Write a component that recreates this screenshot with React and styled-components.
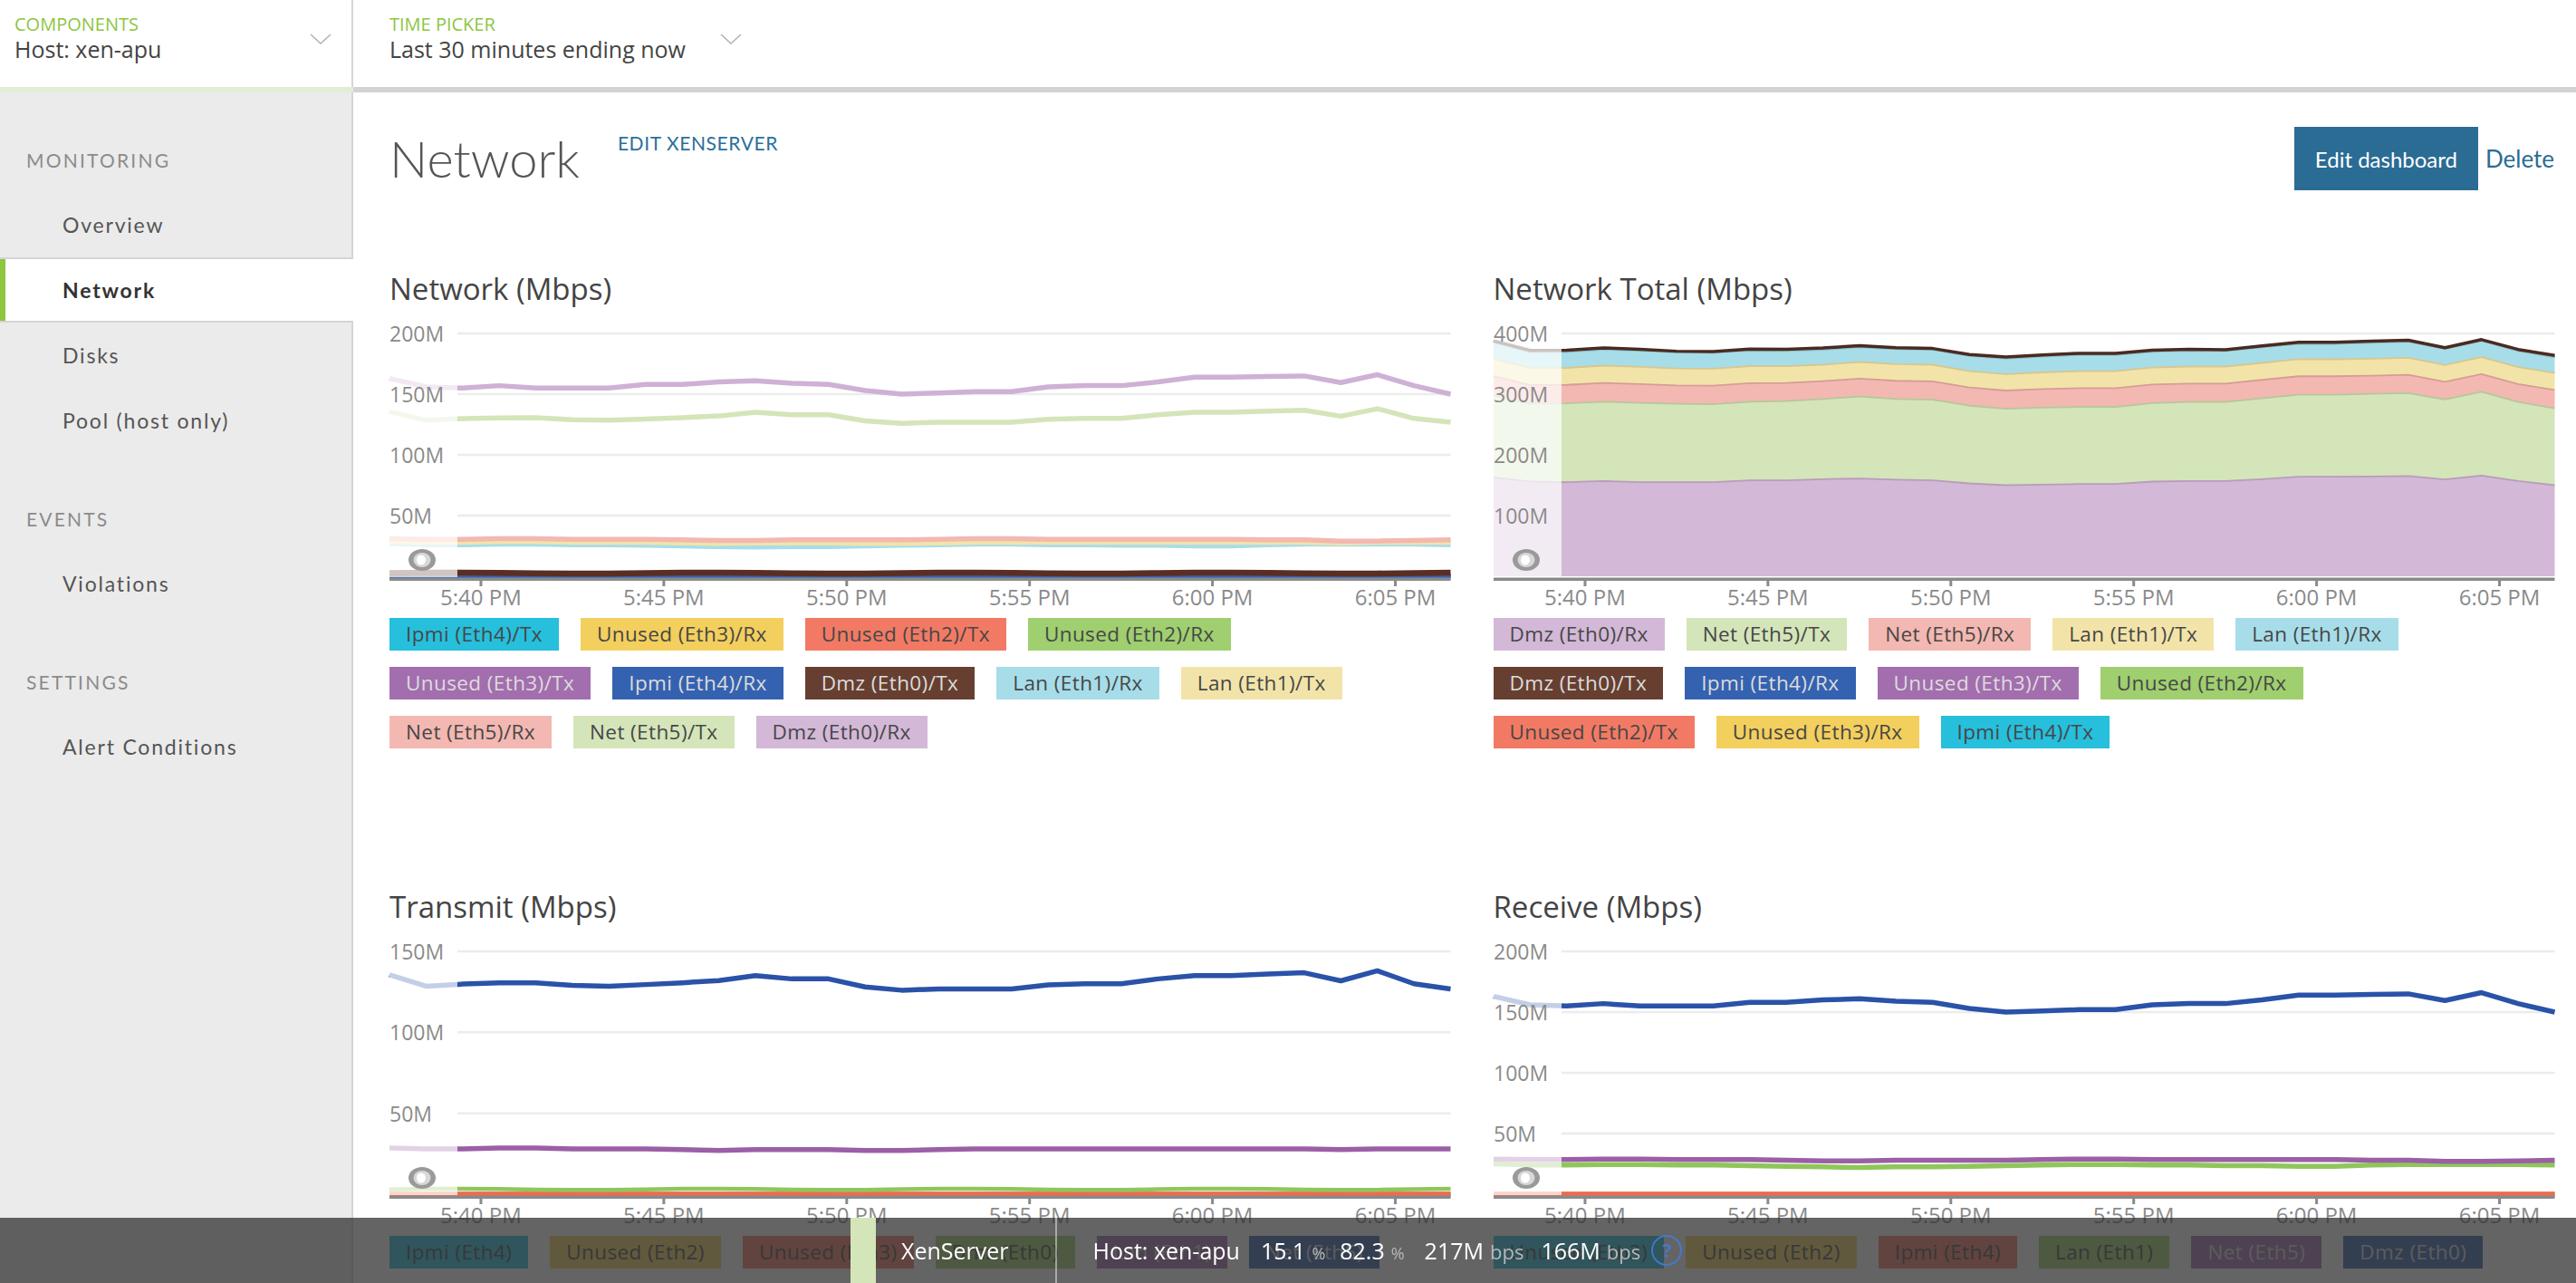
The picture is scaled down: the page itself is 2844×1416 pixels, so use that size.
import React from 'react';
import styled, { createGlobalStyle } from 'styled-components';

const GlobalStyle = createGlobalStyle`
  html, body { margin: 0; padding: 0; background: #fff; overflow: hidden; }
  body { font-family: "Open Sans", "Liberation Sans", sans-serif; color: #444; }
  * { box-sizing: border-box; }
`;

const NARROW = `"Open Sans", "Liberation Sans", sans-serif`;
const WIDE = `Lato, "Open Sans", sans-serif`;

/* ---------------- data ---------------- */
const N = 30;
const zero = Array(N).fill(0);
const dmzRxV = [163,156,155,157,155,155,155,158,158,160,161,159,158,153,150,151,152,152,156,157,157,160,164,164,164.5,165,159.5,166,157,150];
const netTxV = [135.5,128.5,129.8,130.5,130.6,129,128.5,129.5,130.6,132,135,133,133,128,126,126.8,126.8,126.8,129.3,130,130,133,135,135,136,136.8,131.8,138,130,126.8];
const netRxV = [31,30.5,30.5,31,31,30.5,30.5,30.5,30,29.5,29.5,30,30,30,30,30.5,31,31,30.5,30.5,30.5,30.5,30.5,30.5,30,30,29,29,29.5,30];
const lanTxV = [28.5,28,28,28.5,28.5,28,28,28,27.5,27,27.5,27.5,27.5,27,27,27.5,28,28,28,28,28,28,28,28,28,28,27.5,28,28,28];
const lanRxV = [27,26,26,26.5,26.5,26,26,25.5,25,24.5,24,24.5,24.5,25,25.5,26,26.5,26.5,26,26,25.5,25.5,25,25,26,26.5,26.5,26.5,26.5,26];
const dmzTxV = Array.from({ length: N }, (_, i) => 2.6 + 0.4 * Math.sin(i * 0.9));

const S = {
  ipmiTx: { label: 'Ipmi (Eth4)/Tx', color: '#26bfdc', values: zero },
  unused3Rx: { label: 'Unused (Eth3)/Rx', color: '#f3cf5e', values: zero },
  unused2Tx: { label: 'Unused (Eth2)/Tx', color: '#f27a64', values: zero },
  unused2Rx: { label: 'Unused (Eth2)/Rx', color: '#9fcf6f', values: zero },
  unused3Tx: { label: 'Unused (Eth3)/Tx', color: '#a36eae', values: zero, light: true },
  ipmiRx: { label: 'Ipmi (Eth4)/Rx', color: '#3562b0', values: zero, light: true },
  dmzTx: { label: 'Dmz (Eth0)/Tx', color: '#673f31', line: '#5a2e22', values: dmzTxV, light: true, width: 6.5, edge: '#4a2a20' },
  lanRx: { label: 'Lan (Eth1)/Rx', color: '#a7dde9', values: lanRxV, edge: '#8cbfcb' },
  lanTx: { label: 'Lan (Eth1)/Tx', color: '#f2e4a9', values: lanTxV, edge: '#d6c78e' },
  netRx: { label: 'Net (Eth5)/Rx', color: '#f3b8b1', values: netRxV, edge: '#d69d96' },
  netTx: { label: 'Net (Eth5)/Tx', color: '#d4e5b9', values: netTxV, edge: '#b6c79c' },
  dmzRx: { label: 'Dmz (Eth0)/Rx', color: '#d3b8d7', line: '#cfb1d5', values: dmzRxV, edge: '#b89cbc' },
};

const netOrder = ['ipmiTx', 'unused3Rx', 'unused2Tx', 'unused2Rx', 'unused3Tx', 'ipmiRx', 'dmzTx', 'lanRx', 'lanTx', 'netRx', 'netTx', 'dmzRx'];
const totalOrder = ['dmzRx', 'netTx', 'netRx', 'lanTx', 'lanRx', 'dmzTx', 'ipmiRx', 'unused3Tx', 'unused2Rx', 'unused2Tx', 'unused3Rx', 'ipmiTx'];

const C = { teal: '#26bfdc', yellow: '#f3cf5e', red: '#f27a64', green: '#9fcf6f', purple: '#a36eae', blue: '#3562b0' };

const transmit = [
  { label: 'Ipmi (Eth4)', color: C.teal, values: zero },
  { label: 'Unused (Eth2)', color: C.yellow, values: zero },
  { label: 'Unused (Eth3)', color: C.red, line: '#ee6a50', values: zero },
  { label: 'Dmz (Eth0)', color: C.green, line: '#8fc65a', values: dmzTxV.map(v => v + 0.4), width: 4.5 },
  { label: 'Lan (Eth1)', color: C.purple, line: '#9b5fa6', values: lanTxV, light: true },
  { label: 'Net (Eth5)', color: C.blue, line: '#2a52a8', values: netTxV, light: true },
];
const receive = [
  { label: 'Unused (Eth3)', color: C.teal, values: zero },
  { label: 'Unused (Eth2)', color: C.yellow, values: zero },
  { label: 'Ipmi (Eth4)', color: C.red, line: '#ee6a50', values: zero },
  { label: 'Lan (Eth1)', color: C.green, line: '#8fc65a', values: lanRxV.map(v => v - 2) },
  { label: 'Net (Eth5)', color: C.purple, line: '#9b5fa6', values: netRxV.map(v => v - 2), light: true },
  { label: 'Dmz (Eth0)', color: C.blue, line: '#2a52a8', values: dmzRxV, light: true },
];

const TIMES = ['5:40 PM', '5:45 PM', '5:50 PM', '5:55 PM', '6:00 PM', '6:05 PM'];

const METRICS = [
  { value: '15.1', unit: '%', gap: 23, unitSize: 18 },
  { value: '82.3', unit: '%', gap: 16, unitSize: 18 },
  { value: '217M', unit: 'bps', gap: 22 },
  { value: '166M', unit: 'bps', gap: 19 },
];

/* ---------------- layout ---------------- */
const Page = styled.div`
  min-height: 100vh;
  display: flex;
  flex-direction: column;
`;

const Header = styled.header`
  display: flex;
  height: 96px;
  background: #fff;
`;

const HeaderCell = styled.div`
  display: flex;
  align-items: flex-start;
  width: ${p => p.$width || 'auto'};
  padding: 14px 0 0 ${p => p.$pad}px;
  border-right: ${p => (p.$divider ? '2px solid #d6d6d6' : 'none')};
`;

const PickerText = styled.div`
  flex: ${p => (p.$grow ? 1 : 'none')};
  display: flex;
  flex-direction: column;
`;

const PickerLabel = styled.span`
  font-family: ${NARROW};
  font-size: 20px;
  line-height: 26px;
  color: #8dc63f;
  text-transform: uppercase;
`;

const PickerValue = styled.span`
  font-family: ${NARROW};
  font-size: 25px;
  line-height: 28px;
  color: #444;
`;

const Chevron = styled.svg`
  margin-top: 23px;
  margin-left: ${p => p.$gap}px;
  margin-right: ${p => p.$right || 0}px;
  flex: none;
`;

const HeaderBar = styled.div`
  display: flex;
  height: 6px;
`;

const BarSegment = styled.div`
  width: ${p => p.$width || 'auto'};
  flex: ${p => (p.$width ? 'none' : 1)};
  background: ${p => p.$color};
`;

const Body = styled.div`
  flex: 1;
  display: flex;
`;

const Sidebar = styled.nav`
  width: 390px;
  flex: none;
  background: #ebebeb;
  border-right: 2px solid #d4d4d4;
  padding-top: 38px;
`;

const NavGroup = styled.div`
  margin-bottom: 36px;
`;

const NavHeading = styled.div`
  height: 72px;
  display: flex;
  align-items: center;
  padding-left: 29px;
  font-family: ${WIDE};
  font-size: 21px;
  letter-spacing: 2.2px;
  color: #8b8b8b;
  text-transform: uppercase;
`;

const NavItem = styled.div`
  height: 72px;
  display: flex;
  align-items: center;
  padding-left: 69px;
  font-family: ${WIDE};
  font-size: 23px;
  letter-spacing: 1.8px;
  color: ${p => (p.$active ? '#333' : '#555')};
  font-weight: ${p => (p.$active ? 700 : 400)};
  background: ${p => (p.$active ? '#fff' : 'transparent')};
  border-top: ${p => (p.$active ? '2px solid #d4d4d4' : 'none')};
  border-bottom: ${p => (p.$active ? '2px solid #d4d4d4' : 'none')};
  box-shadow: ${p => (p.$active ? 'inset 6px 0 0 #8dc63f' : 'none')};
  margin-right: ${p => (p.$active ? '-2px' : '0')};
`;

const Main = styled.main`
  flex: 1;
  min-width: 0;
  padding: 38px 24px 0 40px;
`;

const TitleRow = styled.div`
  display: flex;
  align-items: flex-start;
  height: 70px;
`;

const PageTitle = styled.h1`
  margin: 0;
  font-family: ${WIDE};
  font-weight: 300;
  font-size: 56px;
  line-height: 70px;
  color: #555;
`;

const EditLink = styled.a`
  margin: 3px 0 0 42px;
  font-family: ${WIDE};
  font-size: 21px;
  line-height: 30px;
  letter-spacing: 0.6px;
  color: #2b6f9b;
  text-transform: uppercase;
  text-decoration: none;
`;

const Actions = styled.div`
  margin-left: auto;
  display: flex;
  align-items: center;
  gap: 8px;
`;

const PrimaryButton = styled.button`
  width: 203px;
  height: 70px;
  border: none;
  background: #2b6c94;
  color: #fff;
  font-family: ${WIDE};
  font-size: 24px;
  padding: 0;
`;

const DeleteLink = styled.a`
  font-family: ${WIDE};
  font-size: 26px;
  color: #2b6c94;
  text-decoration: none;
`;

const ChartsGrid = styled.div`
  margin-top: 89px;
  display: grid;
  grid-template-columns: 1fr 1fr;
  column-gap: 47px;
  row-gap: 155px;
`;

const Panel = styled.section`
  min-width: 0;
`;

const ChartTitle = styled.h2`
  margin: 0;
  font-family: ${NARROW};
  font-weight: 400;
  font-size: 33px;
  line-height: 40px;
  color: #444;
`;

const ChartSvg = styled.svg`
  display: block;
  width: 100%;
  height: 340px;
  overflow: visible;
`;

const AxisText = styled.text`
  font-family: ${NARROW};
  font-size: ${p => p.$size}px;
  fill: #8a8a8a;
`;

const Legend = styled.div`
  margin-top: 3px;
  display: flex;
  flex-direction: column;
  gap: 18px;
`;

const LegendRow = styled.div`
  display: flex;
  gap: 24px;
  white-space: nowrap;
`;

const Chip = styled.span`
  height: 36px;
  line-height: 36px;
  padding: 0 18px;
  font-family: ${NARROW};
  font-size: 22.5px;
  letter-spacing: 0.4px;
  background: ${p => p.$bg};
  color: ${p => (p.$light ? '#dcdcdc' : '#474747')};
`;

const StatusBar = styled.div`
  position: fixed;
  left: 0;
  right: 0;
  bottom: 0;
  height: 72px;
  background: rgba(51, 51, 51, 0.76);
  display: flex;
  align-items: center;
  padding-left: 939px;
  font-family: ${NARROW};
  color: #fff;
`;

const AppSwatch = styled.div`
  align-self: stretch;
  width: 28px;
  background: #d4e5b9;
`;

const StatusText = styled.span`
  margin-left: ${p => p.$gap}px;
  font-size: 25px;
  color: #fff;
`;

const StatusDivider = styled.div`
  align-self: stretch;
  width: 2px;
  margin-left: 51px;
  background: rgba(255, 255, 255, 0.45);
`;

const Metric = styled.span`
  display: flex;
  align-items: baseline;
  gap: 7px;
  margin-left: ${p => p.$gap}px;
`;

const MetricValue = styled.span`
  font-size: 25px;
  color: #fff;
`;

const MetricUnit = styled.span`
  font-size: ${p => p.$size || 22}px;
  color: #b8b8b8;
`;

const HelpIcon = styled.span`
  margin-left: 12px;
  width: 34px;
  height: 34px;
  border-radius: 50%;
  border: 2.5px solid #3f7fd6;
  color: #3f7fd6;
  display: flex;
  align-items: center;
  justify-content: center;
  font-size: 21px;
  font-weight: 700;
  opacity: 0.85;
`;

/* ---------------- chart ---------------- */
const W = 1172;
const TOP = 29;
const BASE = 297;
const LEFT = 75;
const STEP = W / (N - 1);

function BrushHandle() {
  return (
    <g>
      <ellipse cx="36" cy="279" rx="15" ry="12" fill="#9a9a9a" />
      <ellipse cx="36" cy="279" rx="9.5" ry="8" fill="#d8d8d8" />
      <ellipse cx="35" cy="279" rx="5" ry="5.5" fill="#fff" />
    </g>
  );
}

function Chart({ max, grid, series, stacked }) {
  const y = v => BASE - (v / max) * (BASE - TOP);
  const x = i => i * STEP;

  let layers = null;
  if (stacked) {
    let cum = Array(N).fill(0);
    layers = series.map(s => {
      const lower = cum;
      const upper = cum.map((c, i) => c + s.values[i]);
      cum = upper;
      const top = upper.map((v, i) => `${x(i)},${y(v)}`);
      const bottom = lower.map((v, i) => `${x(i)},${y(v)}`).reverse();
      return { s, area: `M${top.join('L')}L${bottom.join('L')}Z`, edge: `M${top.join('L')}` };
    });
  }

  return (
    <ChartSvg viewBox={`0 0 ${W} 340`} preserveAspectRatio="none">
      {grid.map(g => (
        <line key={g} x1={LEFT} x2={W} y1={y(g)} y2={y(g)} stroke="#ececec" strokeWidth="2.5" />
      ))}
      {stacked
        ? (
          <g>
            {layers.map(l => (
              <path key={l.s.label} d={l.area} fill={l.s.color} />
            ))}
            {layers.filter(l => l.s.edge).map(l => (
              <path key={l.s.label} d={l.edge} fill="none" stroke={l.s.edge}
                strokeWidth={l.s.label.startsWith('Dmz (Eth0)/Tx') ? 3.5 : 1.8} strokeLinejoin="round" />
            ))}
          </g>
        )
        : series.map(s => (
          <polyline
            key={s.label}
            points={s.values.map((v, i) => `${x(i)},${y(v)}`).join(' ')}
            fill="none"
            stroke={s.line || s.color}
            strokeWidth={s.width || 5.5}
            strokeLinejoin="round"
          />
        ))}
      <rect x="0" y="0" width={LEFT} height={BASE + 1} fill="#fff" opacity="0.72" />
      {grid.map(g => (
        <AxisText key={g} $size={23} x="0" y={y(g)} dominantBaseline="central">{`${g}M`}</AxisText>
      ))}
      <BrushHandle />
      <rect x="0" y="298.5" width={W} height="3.5" fill="#8a8a8a" />
      {TIMES.map((t, n) => {
        const tx = 101 + n * 202;
        return (
          <g key={t}>
            <rect x={tx - 1.5} y="301" width="3" height="7" fill="#8a8a8a" />
            <AxisText $size={24} x={tx} y="320" textAnchor="middle" dominantBaseline="central">{t}</AxisText>
          </g>
        );
      })}
    </ChartSvg>
  );
}

function ChartPanel({ title, max, grid, series, stacked, rows }) {
  return (
    <Panel>
      <ChartTitle>{title}</ChartTitle>
      <Chart max={max} grid={grid} series={series} stacked={stacked} />
      <Legend>
        {rows.map((row, r) => (
          <LegendRow key={r}>
            {row.map(s => (
              <Chip key={s.label} $bg={s.color} $light={s.light}>{s.label}</Chip>
            ))}
          </LegendRow>
        ))}
      </Legend>
    </Panel>
  );
}

function ChevronDown({ gap, right }) {
  return (
    <Chevron $gap={gap} $right={right} width="24" height="12" viewBox="0 0 24 12">
      <polyline points="1,1 12,11 23,1" fill="none" stroke="#b3b3b3" strokeWidth="1.6" />
    </Chevron>
  );
}

const nav = [
  { heading: 'Monitoring', items: ['Overview', 'Network', 'Disks', 'Pool (host only)'] },
  { heading: 'Events', items: ['Violations'] },
  { heading: 'Settings', items: ['Alert Conditions'] },
];

export default function App() {
  const netSeries = netOrder.map(k => S[k]);
  const totalSeries = totalOrder.map(k => S[k]);
  const rowsOf = (list, cuts) => cuts.map(([a, b]) => list.slice(a, b));

  return (
    <Page>
      <GlobalStyle />
      <Header>
        <HeaderCell $width="390px" $pad={16} $divider>
          <PickerText $grow>
            <PickerLabel>Components</PickerLabel>
            <PickerValue>Host: xen-apu</PickerValue>
          </PickerText>
          <ChevronDown gap={0} right={22} />
        </HeaderCell>
        <HeaderCell $pad={40}>
          <PickerText>
            <PickerLabel>Time picker</PickerLabel>
            <PickerValue>Last 30 minutes ending now</PickerValue>
          </PickerText>
          <ChevronDown gap={38} />
        </HeaderCell>
      </Header>
      <HeaderBar>
        <BarSegment $width="390px" $color="#e2edd7" />
        <BarSegment $color="#d3d3d3" />
      </HeaderBar>
      <Body>
        <Sidebar>
          {nav.map(g => (
            <NavGroup key={g.heading}>
              <NavHeading>{g.heading}</NavHeading>
              {g.items.map(it => (
                <NavItem key={it} $active={it === 'Network'}>{it}</NavItem>
              ))}
            </NavGroup>
          ))}
        </Sidebar>
        <Main>
          <TitleRow>
            <PageTitle>Network</PageTitle>
            <EditLink>Edit XenServer</EditLink>
            <Actions>
              <PrimaryButton>Edit dashboard</PrimaryButton>
              <DeleteLink>Delete</DeleteLink>
            </Actions>
          </TitleRow>
          <ChartsGrid>
            <ChartPanel
              title="Network (Mbps)"
              max={200}
              grid={[200, 150, 100, 50]}
              series={netSeries}
              rows={rowsOf(netSeries, [[0, 4], [4, 9], [9, 12]])}
            />
            <ChartPanel
              title="Network Total (Mbps)"
              max={400}
              grid={[400, 300, 200, 100]}
              series={totalSeries}
              stacked
              rows={rowsOf(totalSeries, [[0, 5], [5, 9], [9, 12]])}
            />
            <ChartPanel
              title="Transmit (Mbps)"
              max={150}
              grid={[150, 100, 50]}
              series={transmit}
              rows={[transmit]}
            />
            <ChartPanel
              title="Receive (Mbps)"
              max={200}
              grid={[200, 150, 100, 50]}
              series={receive}
              rows={[receive]}
            />
          </ChartsGrid>
        </Main>
      </Body>
      <StatusBar>
        <AppSwatch />
        <StatusText $gap={28}>XenServer</StatusText>
        <StatusDivider />
        <StatusText $gap={40}>Host: xen-apu</StatusText>
        {METRICS.map(m => (
          <Metric key={m.value} $gap={m.gap}>
            <MetricValue>{m.value}</MetricValue>
            <MetricUnit $size={m.unitSize}>{m.unit}</MetricUnit>
          </Metric>
        ))}
        <HelpIcon>?</HelpIcon>
      </StatusBar>
    </Page>
  );
}
